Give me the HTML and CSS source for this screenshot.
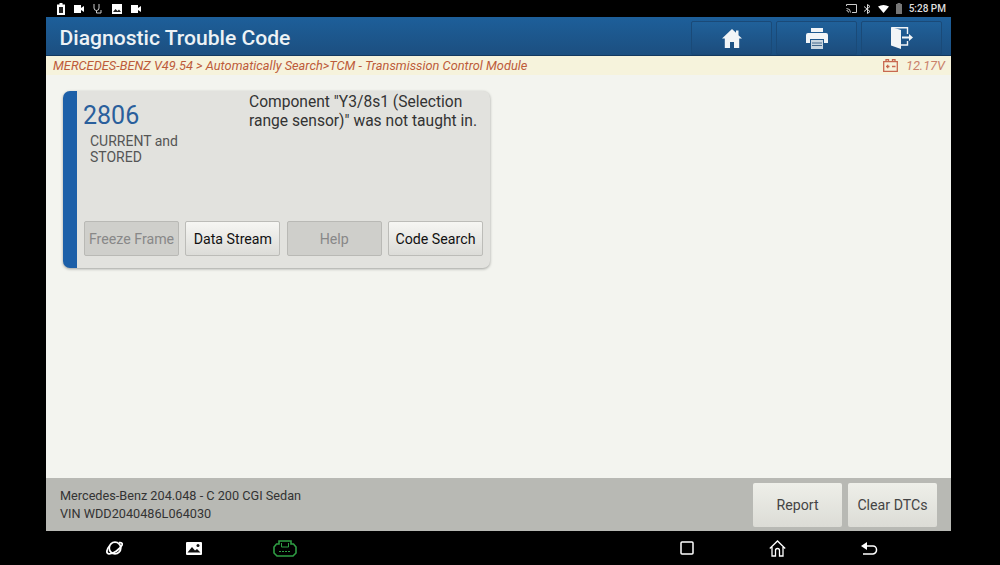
FILE: index.html
```html
<!DOCTYPE html>
<html>
<head>
  <meta charset="utf-8">
  <title>Diagnostic Trouble Code</title>
  <link rel="stylesheet" href="styles.css">
</head>
<body>
  <div id="tablet">
    <div class="status-bar">
      <div class="status-left">
        <svg width="8" height="12" viewBox="0 0 8 12"><path fill="#fff" d="M2.500 0h3v1.500H8V12H0V1.500h2.500z"/><rect x="2" y="4" width="4" height="6" fill="#222"/></svg>
        <svg width="10" height="8" viewBox="0 0 10 8"><path fill="#fff" d="M0 0h7v3l3-2v6L7 5v3H0z"/></svg>
        <svg width="10" height="10" viewBox="0 0 10 10"><path fill="none" stroke="#ccc" d="M1 0v4a2.500 2.500 0 0 0 5 0V0M3.500 6.500V9H8V6"/></svg>
        <svg width="10" height="10" viewBox="0 0 10 10"><path fill="#fff" d="M0 0h10v10H0z"/><path fill="#222" d="M1 8l2.500-3 2 2 1.500-1.500L9 8z"/></svg>
        <svg width="10" height="8" viewBox="0 0 10 8"><path fill="#fff" d="M0 0h7v3l3-2v6L7 5v3H0z"/></svg>
      </div>
      <div class="status-right">
        <svg width="11" height="9" viewBox="0 0 11 9"><path fill="none" stroke="#ccc" d="M.5 2V.5h10v8H6M.5 4.500a4 4 0 0 1 4 4M.5 6.500a2 2 0 0 1 2 2"/></svg>
        <svg width="7" height="10" viewBox="0 0 7 10"><path fill="none" stroke="#ddd" d="M0 2.500l6 5L3.500 9.500V.5L6 2.500l-6 5"/></svg>
        <svg width="11" height="8" viewBox="0 0 11 8"><path fill="#fff" d="M0 1.500Q5.500-1.500 11 1.500L5.500 8z"/></svg>
        <svg width="6" height="11" viewBox="0 0 6 11"><path fill="#777" d="M1.500 0h3v1H6v10H0V1h1.500z"/></svg>
        <span class="clock">5:28 PM</span>
      </div>
    </div>

    <div id="screen">
      <header class="title-bar">
        <h1>Diagnostic Trouble Code</h1>
        <div class="title-buttons">
          <button class="title-btn">
            <svg width="20" height="19" viewBox="0 0 20 19"><path fill="#f2f5f7" d="M10 0l4 3.800V1.500h2.500v4.700L20 9.500h-2.800V19H12v-6H8v6H2.800V9.500H0z"/></svg>
          </button>
          <button class="title-btn">
            <svg width="22" height="21" viewBox="0 0 22 21"><path fill="#f2f5f7" d="M5 0h12v4H5zM2 5h18a2 2 0 0 1 2 2v8h-4v-4H4v4H0V7a2 2 0 0 1 2-2z"/><path fill="#c9d6e0" d="M5 12h12v9H5z"/><path stroke="#44698c" d="M6 15h10M6 17.500h10"/></svg>
          </button>
          <button class="title-btn">
            <svg width="22" height="22" viewBox="0 0 22 22"><path fill="#f2f5f7" d="M0 0l10 3v19L0 18.500z"/><path fill="none" stroke="#f2f5f7" stroke-width="1.400" d="M1 .7h15.500V7M10 18h6.500v-4"/><path fill="#f2f5f7" d="M11 9.500h7V7l4 3.500-4 3.500v-2.500h-7z"/></svg>
          </button>
        </div>
      </header>

      <div class="path-bar">
        <span>MERCEDES-BENZ V49.54 &gt; Automatically Search&gt;TCM - Transmission Control Module</span>
        <span class="voltage">
          <svg width="15" height="13" viewBox="0 0 15 13"><path fill="none" stroke="#c8684f" stroke-width="1.300" d="M.7 2.700h13.600v9.600H.7zM3 2.700V.7h2.500v2M9.500 2.700V.7H12v2M3 7.500h3.500M4.700 5.800v3.400M9 7.500h3.500"/></svg>
          12.17V
        </span>
      </div>

      <main class="content">
        <div class="dtc-card">
          <div class="dtc-top">
            <div class="dtc-code">
              <div class="code-num">2806</div>
              <div class="code-status">CURRENT and STORED</div>
            </div>
            <div class="dtc-desc">Component "Y3/8s1 (Selection range sensor)" was not taught in.</div>
          </div>
          <div class="dtc-actions">
            <button class="dtc-btn" disabled>Freeze Frame</button>
            <button class="dtc-btn">Data Stream</button>
            <button class="dtc-btn" disabled>Help</button>
            <button class="dtc-btn">Code Search</button>
          </div>
        </div>
      </main>

      <footer class="info-bar">
        <div class="vehicle-info">
          <div>Mercedes-Benz 204.048 - C 200 CGI Sedan</div>
          <div>VIN WDD2040486L064030</div>
        </div>
        <div class="info-actions">
          <button class="info-btn report-btn">Report</button>
          <button class="info-btn">Clear DTCs</button>
        </div>
      </footer>
    </div>

    <nav class="nav-bar">
      <div class="nav-left">
        <svg width="20" height="16" viewBox="0 0 22 18"><circle cx="11" cy="9" r="6.500" fill="none" stroke="#fff" stroke-width="2"/><path fill="none" stroke="#fff" stroke-width="2" d="M5 6.500C1 11 1 15 4 15.500c4 .5 13-5 15-10 .7-2-1-3-3.500-2.500"/></svg>
        <svg width="16" height="13" viewBox="0 0 16 13"><rect width="16" height="13" rx="1" fill="#fff"/><path fill="#111" d="M1.500 10.500L6 5l3 3.500 2-1.500 3.500 3.500z"/><circle cx="12" cy="3.500" r="1.500" fill="#111"/></svg>
        <svg class="obd-icon" width="24" height="17" viewBox="0 0 24 17"><path fill="none" stroke="#2f9e44" stroke-width="1.600" d="M6 1h12v3h2.500L23 7v6l-3 3H4l-3-3V7l2.500-3H6z"/><path fill="none" stroke="#2f9e44" d="M8.500 3v4h7V3"/><path stroke="#2f9e44" stroke-dasharray="2 1" d="M6 11.500h12"/></svg>
      </div>
      <div class="nav-right">
        <svg width="14" height="14" viewBox="0 0 14 14"><rect x="1" y="1" width="12" height="12" rx="1" fill="none" stroke="#fff" stroke-width="1.500"/></svg>
        <svg width="17" height="17" viewBox="0 0 17 17"><path fill="none" stroke="#fff" stroke-width="1.300" d="M.8 8.500L8.500 1l7.700 7.500M3 7v9h3.500v-5.500a2 2 0 0 1 4 0V16H14V7"/></svg>
        <svg width="17" height="15" viewBox="0 0 17 15"><path fill="none" stroke="#fff" stroke-width="1.500" d="M2 5h10a3.500 3.500 0 0 1 3.500 3.500v0A4 4 0 0 1 12 13H2"/><path fill="#fff" d="M6 1v8L0 5z"/></svg>
      </div>
    </nav>
  </div>
</body>
</html>
```

FILE: styles.css
```css
html, body {
  margin: 0;
  padding: 0;
  background-color: #000;
}

body {
  font-family: Roboto, 'Liberation Sans', sans-serif;
  overflow: hidden;
}

button {
  font-family: inherit;
}

#tablet {
  width: 1000px;
  height: 565px;
  padding: 0 49px 0 46px;
  box-sizing: border-box;
  display: flex;
  flex-direction: column;
}

.status-bar {
  height: 17px;
  display: flex;
  justify-content: space-between;
  align-items: center;
  padding: 0 5px 0 11px;
}

.status-left {
  display: flex;
  align-items: center;
  gap: 9px;
}

.status-right {
  display: flex;
  align-items: center;
  gap: 7px;
}

.clock {
  font-size: 10px;
  font-weight: 500;
  color: #ddd;
}

#screen {
  height: 514px;
  display: flex;
  flex-direction: column;
  background-color: #f3f4ef;
}

.title-bar {
  height: 39px;
  flex-shrink: 0;
  display: flex;
  justify-content: space-between;
  align-items: stretch;
  padding: 4px 9px 0 13.500px;
  box-sizing: border-box;
  background: linear-gradient(#1d5f9a, #1c4f80);
  border-bottom: 1px solid #14395f;
}

.title-bar h1 {
  margin: 0;
  font-size: 21.100px;
  font-weight: 500;
  line-height: 34px;
  color: #edf2f5;
}

.title-buttons {
  display: flex;
  gap: 4px;
}

.title-btn {
  width: 81px;
  height: 34px;
  padding: 0;
  display: flex;
  align-items: center;
  justify-content: center;
  background: linear-gradient(#20619a, #1c4c7c);
  border: 1px solid #1a4a78;
  border-radius: 2px;
}

.path-bar {
  height: 19px;
  flex-shrink: 0;
  display: flex;
  justify-content: space-between;
  align-items: center;
  padding: 0 6px 0 7px;
  background-color: #f6f3dc;
  font-size: 12.800px;
  font-style: italic;
  color: #bd5b3a;
}

.voltage {
  display: flex;
  align-items: center;
  gap: 8px;
  color: #c9806a;
}

.content {
  flex: 1;
  padding: 16px 0 0 17px;
}

.dtc-card {
  width: 427px;
  height: 177px;
  box-sizing: border-box;
  padding: 0 7px 12px 7px;
  display: flex;
  flex-direction: column;
  justify-content: space-between;
  background-color: #e2e2de;
  border-left: 14px solid #1c5fa8;
  border-radius: 7px;
  box-shadow: 0 1px 3px rgba(0, 0, 0, 0.35);
}

.dtc-top {
  display: flex;
  margin-left: -1px;
}

.dtc-code {
  width: 166px;
  flex-shrink: 0;
}

.code-num {
  margin-top: 10px;
  font-size: 25px;
  line-height: 30px;
  color: #2a5f9c;
}

.code-status {
  width: 100px;
  margin: 2px 0 0 7px;
  font-size: 14px;
  line-height: 16px;
  color: #555;
}

.dtc-desc {
  margin-top: 2px;
  font-size: 15.600px;
  line-height: 18.500px;
  color: #333;
}

.dtc-actions {
  display: flex;
  justify-content: space-between;
}

.dtc-btn {
  width: 95px;
  height: 35px;
  padding: 0;
  font-size: 14.200px;
  color: #111;
  background: linear-gradient(#f6f6f3, #dcdcd8);
  border: 1px solid #bcbcb8;
  border-radius: 2px;
}

.dtc-btn:disabled {
  color: #888;
  background: #cfcfcb;
  border-color: #b9b9b5;
}

.info-bar {
  height: 53px;
  flex-shrink: 0;
  display: flex;
  justify-content: space-between;
  align-items: center;
  padding: 0 14px;
  box-sizing: border-box;
  background-color: #b8b9b4;
}

.vehicle-info {
  font-size: 12.700px;
  line-height: 17.500px;
  color: #333;
}

.info-actions {
  display: flex;
  gap: 6px;
}

.info-btn {
  width: 89px;
  height: 44px;
  padding: 0;
  font-size: 14.200px;
  color: #444;
  background: linear-gradient(#eeefe9, #dcdcd6);
  border: none;
  border-radius: 2px;
}

.nav-bar {
  flex: 1;
  display: flex;
  align-items: center;
  justify-content: space-between;
}

.nav-left {
  display: flex;
  align-items: center;
  gap: 61px;
  margin-left: 59px;
}

.obd-icon {
  margin-left: 10px;
}

.nav-right {
  display: flex;
  align-items: center;
  gap: 75px;
  margin-right: 73px;
}
```
